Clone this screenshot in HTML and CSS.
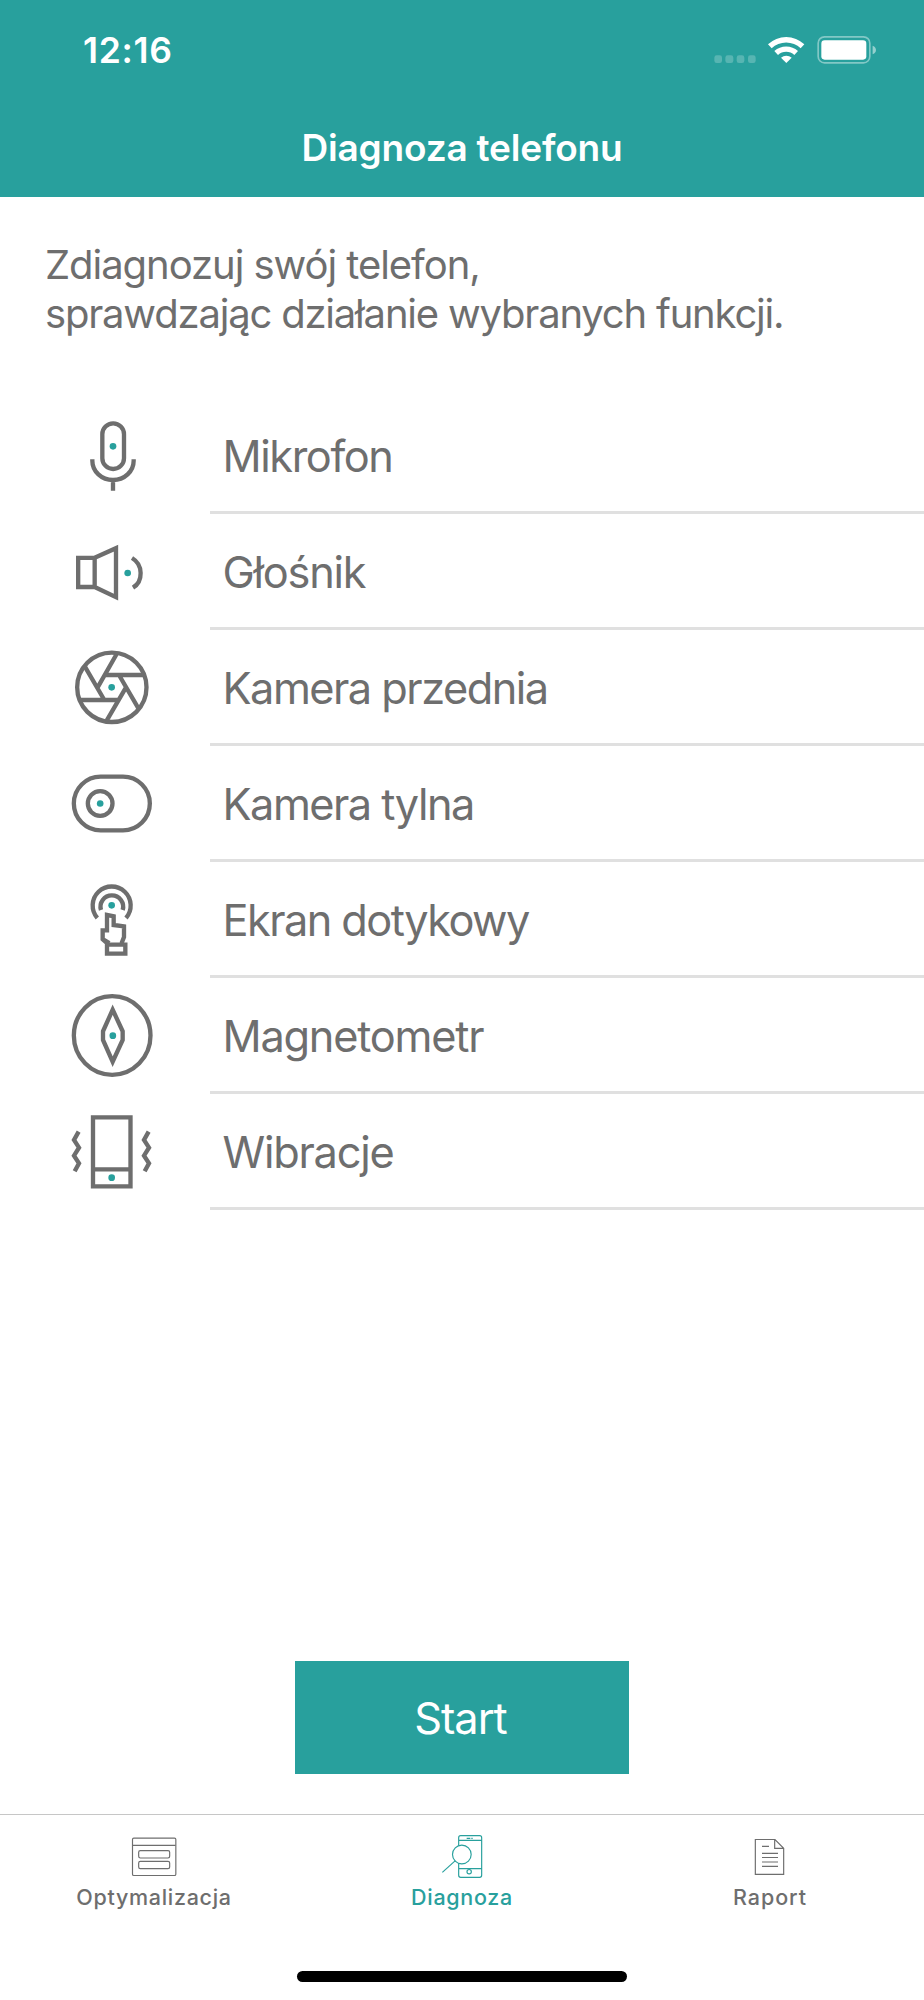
FILE: index.html
```html
<!DOCTYPE html>
<html lang="pl">
<head>
<meta charset="utf-8">
<title>Diagnoza telefonu</title>
<link rel="stylesheet" href="styles.css">
</head>
<body>
<div class="screen">
  <header class="header">
    <div class="status">
      <span class="time">12:16</span>
      <svg class="status-icons" viewBox="740 100 520 100">
        <g fill="#fff" fill-opacity=".22">
          <rect x="756" y="167" width="23" height="23" rx="7"/>
          <rect x="789" y="167" width="24" height="23" rx="7"/>
          <rect x="823" y="167" width="23" height="23" rx="7"/>
          <rect x="857" y="167" width="23" height="23" rx="7"/>
        </g>
        <g fill="#fff">
          <path d="M917 134A79 79 0 0 1 1026 134L1015 146A62 62 0 0 0 928 146Z"/>
          <path d="M936 154A53 53 0 0 1 1007 154L996 166A36 36 0 0 0 947 166Z"/>
          <path d="M956 174A24 24 0 0 1 988 174L972 190Z"/>
          <rect x="1077" y="122" width="135" height="58" rx="10"/>
        </g>
        <rect x="1067.500" y="111.500" width="155" height="78" rx="19" fill="none" stroke="#fff" stroke-opacity=".42" stroke-width="5"/>
        <path d="M1231 138Q1241 142 1241 151Q1241 160 1231 164Z" fill="#fff" fill-opacity=".5"/>
      </svg>
    </div>
    <h1 class="title">Diagnoza telefonu</h1>
  </header>

  <main class="content">
    <p class="intro"><span class="intro-first">Zdiagnozuj swój telefon,</span><br>sprawdzając działanie wybranych funkcji.</p>
    <ul class="list">
      <li class="row">
        <svg class="icon" viewBox="0 0 300 348">
          <rect x="157" y="76" width="65" height="137" rx="32.500"/>
          <path d="M127 184V188A62 58 0 0 0 251 188V184M189 246V278"/>
          <circle class="dot" cx="189" cy="145" r="10"/>
        </svg>
        <span class="label snug">Mikrofon</span>
      </li>
      <li class="row">
        <svg class="icon" viewBox="0 0 300 348">
          <path d="M84.500 131.500H134V219H84.500ZM134 131.500L198 102.500V249.500L134 219"/>
          <path d="M246 132C280 152 280 202 249 221"/>
          <circle class="dot" cx="233" cy="177" r="10"/>
        </svg>
        <span class="label">Głośnik</span>
      </li>
      <li class="row">
        <svg class="icon" viewBox="0 0 300 348">
          <circle cx="185.500" cy="172" r="104"/>
          <path d="M200 72L143 172M103 107L163 210M88 210H205M170 272L228 172M267 238L207 135M282 135H165"/>
          <circle class="dot" cx="185" cy="172" r="10"/>
        </svg>
        <span class="label tight">Kamera przednia</span>
      </li>
      <li class="row">
        <svg class="icon" viewBox="0 0 300 348">
          <rect x="71.500" y="92" width="228" height="161" rx="80.500"/>
          <circle cx="150.500" cy="172.500" r="37"/>
          <circle class="dot" cx="150.500" cy="172.500" r="10"/>
        </svg>
        <span class="label tight">Kamera tylna</span>
      </li>
      <li class="row">
        <svg class="icon" viewBox="0 0 300 348">
          <path d="M142 168A57 57 0 1 1 228 168M153 144A34 34 0 1 1 218 144"/>
          <path d="M171 243L158 232V205H171V159L191 163V189L222 193V225L215 243M171 248H226V275H171ZM158 231L178 243"/>
          <circle class="dot" cx="185" cy="130" r="10"/>
        </svg>
        <span class="label tighter">Ekran dotykowy</span>
      </li>
      <li class="row">
        <svg class="icon" viewBox="0 0 300 348">
          <ellipse cx="186.500" cy="172.500" rx="115" ry="118"/>
          <path d="M188 95L218 160V186L188 251L159 186V160Z"/>
          <circle class="dot" cx="188.500" cy="173" r="10"/>
        </svg>
        <span class="label">Magnetometr</span>
      </li>
      <li class="row">
        <svg class="icon" viewBox="0 0 300 348">
          <path d="M129 70H241.500V277H129ZM129 226H241.500"/>
          <path d="M86 113L72 138L87 161L72 185L87 208L74 232M296 113L282 138L297 161L282 185L297 208L284 232"/>
          <circle class="dot" cx="185" cy="251" r="10"/>
        </svg>
        <span class="label">Wibracje</span>
      </li>
    </ul>
    <button class="start" type="button">Start</button>
  </main>

  <nav class="tabs">
    <a class="tab">
      <svg class="tab-icon" viewBox="222 90 180 150">
        <rect x="247.500" y="114.500" width="130" height="112" rx="4"/>
        <path d="M248 136H377"/>
        <rect x="266" y="152" width="93" height="22" rx="5"/>
        <rect x="266" y="184" width="93" height="22" rx="5"/>
      </svg>
      <span class="tab-label">Optymalizacja</span>
    </a>
    <a class="tab active">
      <svg class="tab-icon" viewBox="156 90 180 150">
        <path d="M236 137V113Q236 107 242 107H299Q305 107 305 113V226Q305 232 299 232H242Q236 232 236 226V190M236 121H305M236 206H305M260 115H271M274 115H278"/>
        <circle cx="245.500" cy="163.500" r="28"/>
        <path d="M226 182L187 217"/>
        <circle cx="267.500" cy="215" r="6.500"/>
      </svg>
      <span class="tab-label">Diagnoza</span>
    </a>
    <a class="tab">
      <svg class="tab-icon" viewBox="120 90 180 150">
        <path d="M166 118.500H225L251 145V223H166ZM224 119V145H251M186 139H207M186 160H234M186 172.500H234M186 186H234M186 199H234"/>
      </svg>
      <span class="tab-label wide">Raport</span>
    </a>
  </nav>
  <div class="home"></div>
</div>
</body>
</html>
```
FILE: styles.css
```css
* { box-sizing: border-box; }
body {
  margin: 0;
  background: #fff;
  color: #6e6e6e;
  font-family: Inter, "Liberation Sans", sans-serif;
}
.screen {
  width: 924px;
  height: 2000px;
  display: flex;
  flex-direction: column;
  overflow: hidden;
}
.header {
  flex: none;
  height: 197px;
  background: #28a09d;
  color: #fff;
}
.status {
  height: 101px;
  display: flex;
  justify-content: space-between;
  padding: 0 42px 0 83px;
}
.time {
  font-size: 35.5px;
  font-weight: 600;
  line-height: 42px;
  letter-spacing: .7px;
  padding-top: 30px;
}
.status-icons {
  width: 173.333px;
  height: 33.333px;
  margin-top: 33.333px;
}
.title {
  margin: 0;
  font-size: 37px;
  font-weight: 600;
  line-height: 46px;
  letter-spacing: -.2px;
  padding-top: 24px;
  text-align: center;
}
.content {
  flex: none;
  height: 1617px;
  display: flex;
  flex-direction: column;
}
.intro {
  margin: 0;
  height: 201px;
  padding: 44px 0 0 45px;
  font-size: 40px;
  line-height: 48.500px;
  letter-spacing: -1.19px;
  white-space: nowrap;
}
.intro-first { letter-spacing: -1.05px; }
.list {
  margin: 0;
  padding: 0;
  list-style: none;
}
.row {
  height: 116px;
  display: flex;
}
.icon {
  flex: none;
  width: 100px;
  height: 116px;
  margin: 0 60px 0 50px;
  overflow: visible;
  fill: none;
  stroke: #6e6e6e;
  stroke-width: 13;
}
.icon .dot {
  fill: #28a09d;
  stroke: none;
}
.label {
  flex: 1;
  border-bottom: 3px solid #e0e0e0;
  padding-left: 12.500px;
  font-size: 43.3px;
  line-height: 116px;
  letter-spacing: -1.22px;
  white-space: nowrap;
}
.snug { letter-spacing: -1.4px; }
.tight { letter-spacing: -1.5px; }
.tighter { letter-spacing: -1.55px; }
.start {
  align-self: center;
  margin: 451px 0 0;
  width: 334px;
  height: 113px;
  border: 0;
  padding: 1px 3px 0 0;
  background: #28a09d;
  color: #fff;
  font: 400 43.3px/112px Inter, "Liberation Sans", sans-serif;
  letter-spacing: -1.05px;
}
.tabs {
  flex: none;
  height: 157px;
  border-top: 1px solid #c6c6c6;
  display: flex;
}
.tab {
  flex: 1;
  display: flex;
  flex-direction: column;
  align-items: center;
  padding-top: 15px;
}
.tab-icon {
  width: 60px;
  height: 50px;
  fill: none;
  stroke: currentColor;
  stroke-width: 3.500;
}
.tab-label {
  font-size: 21.500px;
  font-weight: 500;
  line-height: 26px;
  letter-spacing: .7px;
  padding-top: 4px;
}
.wide { letter-spacing: .95px; }
.active { color: #28a09d; }
.home {
  align-self: center;
  width: 330px;
  height: 11px;
  border-radius: 6px;
  background: #000;
}
```
